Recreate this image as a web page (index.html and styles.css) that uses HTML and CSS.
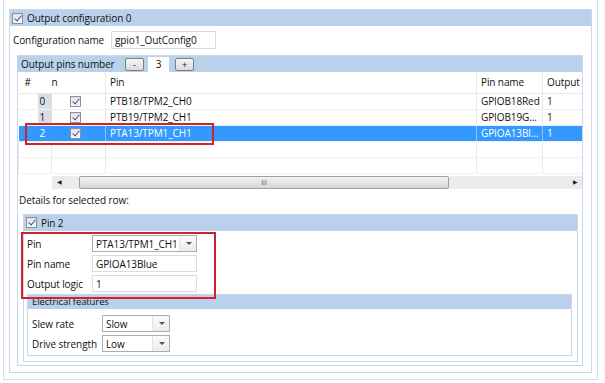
FILE: index.html
```html
<!DOCTYPE html>
<html lang="en">
<head>
  <meta charset="UTF-8">
  <title>Output configuration</title>
  <link rel="stylesheet" href="styles.css">
</head>
<body>
  <div class="frame">
    <div class="group">
      <div class="group-head"><span class="check"></span>Output configuration 0</div>

      <div class="config-row">
        <span class="config-label">Configuration name</span>
        <span class="field config-field">gpio1_OutConfig0</span>
      </div>

      <div class="pins">
        <div class="pins-head">
          <span class="pins-label">Output pins number</span>
          <span class="btn">-</span>
          <span class="count">3</span>
          <span class="btn">+</span>
        </div>

        <table class="grid">
          <colgroup>
            <col class="c-num"><col class="c-en"><col class="c-pin"><col class="c-name"><col class="c-out">
          </colgroup>
          <thead>
            <tr><th class="h-num">#</th><th class="h-en">n</th><th>Pin</th><th>Pin name</th><th>Output</th></tr>
          </thead>
          <tbody>
            <tr><td class="num"><span>0</span></td><td class="en"><span class="check"></span></td><td>PTB18/TPM2_CH0</td><td>GPIOB18Red</td><td>1</td></tr>
            <tr><td class="num"><span>1</span></td><td class="en"><span class="check"></span></td><td>PTB19/TPM2_CH1</td><td>GPIOB19G...</td><td>1</td></tr>
            <tr class="selected"><td class="num"><span>2</span></td><td class="en"><span class="check"></span></td><td>PTA13/TPM1_CH1</td><td>GPIOA13Bl...</td><td>1</td></tr>
            <tr class="empty"><td></td><td></td><td></td><td></td><td></td></tr>
            <tr class="empty"><td></td><td></td><td></td><td></td><td></td></tr>
          </tbody>
        </table>

        <div class="hscroll">
          <span class="arrow">&#9664;</span>
          <span class="thumb">III</span>
          <span class="arrow right">&#9654;</span>
        </div>

        <div class="details">Details for selected row:</div>

        <div class="pin-box">
          <div class="group-head"><span class="check"></span>Pin 2</div>
          <div class="form">
            <div class="form-row"><span class="form-label">Pin</span><span class="field select">PTA13/TPM1_CH1<span class="drop"></span></span></div>
            <div class="form-row"><span class="form-label">Pin name</span><span class="field">GPIOA13Blue</span></div>
            <div class="form-row"><span class="form-label">Output logic</span><span class="field">1</span></div>
          </div>

          <div class="elec">
            <div class="elec-head">Electrical features</div>
            <div class="elec-body">
              <div class="elec-row"><span class="elec-label">Slew rate</span><span class="field select small">Slow<span class="drop"></span></span></div>
              <div class="elec-row"><span class="elec-label">Drive strength</span><span class="field select small">Low<span class="drop"></span></span></div>
            </div>
          </div>
        </div>
      </div>
    </div>
  </div>

  <!-- annotation boxes -->
  <div class="mark mark-row"></div>
  <div class="mark mark-form"></div>
</body>
</html>
```

FILE: styles.css
```css
* {
  box-sizing: border-box;
}

body {
  margin: 0;
  font-family: "Open Sans", sans-serif;
  font-size: 10px;
  letter-spacing: -0.1px;
  color: #111;
  background: #fff;
  white-space: nowrap;
}

.frame {
  position: relative;
  margin-left: 3px;
  width: 595px;
  height: 380px;
  border: 1px solid #d3deec;
  border-top: none;
  padding: 9px 5px 6px 5px;
}

.group {
  border: 1px solid #c8d7ea;
  height: 364px;
}

.group-head {
  display: flex;
  align-items: center;
  height: 16px;
  background: #bad1eb;
  padding-left: 2px;
}

.group-head .check {
  margin-right: 4px;
}

/* checkbox */
.check {
  display: inline-block;
  width: 11px;
  height: 11px;
  border: 1px solid #8e8f8f;
  background: linear-gradient(#dfe3e8, #f7f8f9) padding-box;
  position: relative;
}

.check::after {
  content: "";
  position: absolute;
  left: 3px;
  top: 0px;
  width: 3px;
  height: 6px;
  border: solid #3c5289;
  border-width: 0 1.5px 1.5px 0;
  transform: rotate(40deg);
}

.config-row {
  display: flex;
  align-items: center;
  height: 29px;
  padding-left: 3px;
  padding-bottom: 1px;
}

.config-label {
  width: 98px;
}

.field {
  display: inline-flex;
  align-items: center;
  height: 18px;
  border: 1px solid #d9dce0;
  background: #fff;
  padding-left: 3px;
  position: relative;
}

.config-field {
  width: 105px;
}

.pins {
  margin: 0 8px 6px 7px;
  border: 1px solid #c8d7ea;
  height: 311px;
}

.pins-head {
  display: flex;
  align-items: center;
  height: 16px;
  background: #bad1eb;
  padding-left: 3px;
}

.pins-label {
  width: 104px;
}

.btn {
  display: inline-flex;
  align-items: center;
  justify-content: center;
  width: 19px;
  height: 13px;
  border: 1px solid #7b7f86;
  border-radius: 2px;
  background: linear-gradient(#f6f6f6, #dadada);
  font-size: 9px;
  line-height: 1;
}

.count {
  display: inline-flex;
  align-items: center;
  justify-content: center;
  width: 21px;
  height: 15px;
  margin: 0 6px 0 4px;
  background: #fff;
}

.grid {
  border-collapse: collapse;
  table-layout: fixed;
  width: 563px;
}

.c-num { width: 33px; }
.c-en { width: 54px; }
.c-pin { width: 371px; }
.c-name { width: 66px; }
.c-out { width: 39px; }

.grid thead tr {
  height: 21px;
}

.grid tbody tr {
  height: 16px;
}

.grid th {
  text-align: left;
  font-weight: normal;
  padding: 0 0 0 4px;
  border-left: 1px solid #e6e9ed;
  border-bottom: 1px solid #e8e8e8;
  overflow: hidden;
}

.grid th.h-num {
  padding-left: 6px;
  border-left: none;
}

.grid th.h-en {
  padding-left: 0;
  border-left: none;
}

.grid td {
  padding: 0 0 0 4px;
  line-height: 15px;
  border-left: 1px solid #e6e9ed;
  border-bottom: 1px solid #efefef;
  overflow: hidden;
}

.grid td.num,
.grid td.en {
  border-left: none;
}

.grid td.num {
  padding-left: 19px;
}

.grid td.num span {
  display: block;
  height: 15px;
  line-height: 15px;
  background: #dadfe6;
  padding-left: 2px;
}

.grid td.en {
  padding-left: 18px;
}

.grid td.en .check {
  display: block;
}

.grid tr.selected td {
  background: #3399ff;
  color: #fff;
  border-left-color: #8cc3fb;
}

.grid tr.selected td.num span {
  background: transparent;
}

.grid tr.empty td {
  border-bottom: 1px solid #f2f2f2;
}

.hscroll {
  display: flex;
  align-items: center;
  height: 13px;
  margin: 2px 0 0 34px;
  background: #ececec;
  font-size: 6px;
  color: #222;
}

.arrow {
  width: 27px;
  padding-left: 5px;
}

.arrow.right {
  margin-left: auto;
  width: 12px;
  padding-left: 3px;
}

.thumb {
  display: flex;
  align-items: center;
  justify-content: center;
  width: 370px;
  height: 13px;
  border: 1px solid #a0a0a0;
  border-radius: 2px;
  background: linear-gradient(#f3f3f3, #d6d6d6);
  font-size: 7px;
  color: #555;
}

.details {
  height: 25px;
  padding: 4px 0 0 1px;
}

.pin-box {
  margin: 0 4px 0 5px;
  border: 1px solid #c8d7ea;
  height: 148px;
}

.form {
  padding: 3px 0 0 3px;
}

.form-row {
  display: flex;
  align-items: center;
  height: 20px;
}

.form-label {
  width: 65px;
}

.form-row .field {
  width: 105px;
  height: 17px;
}

.select {
  border-color: #abadb3;
}

.drop {
  position: absolute;
  right: 0;
  top: 0;
  width: 17px;
  height: 100%;
  border-left: 1px solid #e3e3e3;
  background: linear-gradient(#fafafa, #ececec);
}

.drop::after {
  content: "";
  position: absolute;
  left: 6px;
  top: 6px;
  border: 3px solid transparent;
  border-top-color: #555;
  border-bottom: 0;
}

.elec {
  margin: 0 5px 0 3px;
  border: 1px solid #c8d7ea;
  height: 62px;
}

.elec-head {
  height: 14px;
  background: #bad1eb;
  padding-left: 4px;
  font-size: 9.5px;
  line-height: 13px;
}

.elec-body {
  padding: 5px 0 0 4px;
}

.elec-row {
  display: flex;
  align-items: center;
  height: 20px;
}

.elec-label {
  width: 70px;
}

.field.small {
  width: 68px;
  height: 17px;
}

/* red annotation boxes */
.mark {
  position: absolute;
  border: 2px solid #d4202a;
}

.mark-row {
  left: 25px;
  top: 123px;
  width: 189px;
  height: 22px;
}

.mark-form {
  left: 21px;
  top: 232px;
  width: 195px;
  height: 67px;
}
```
